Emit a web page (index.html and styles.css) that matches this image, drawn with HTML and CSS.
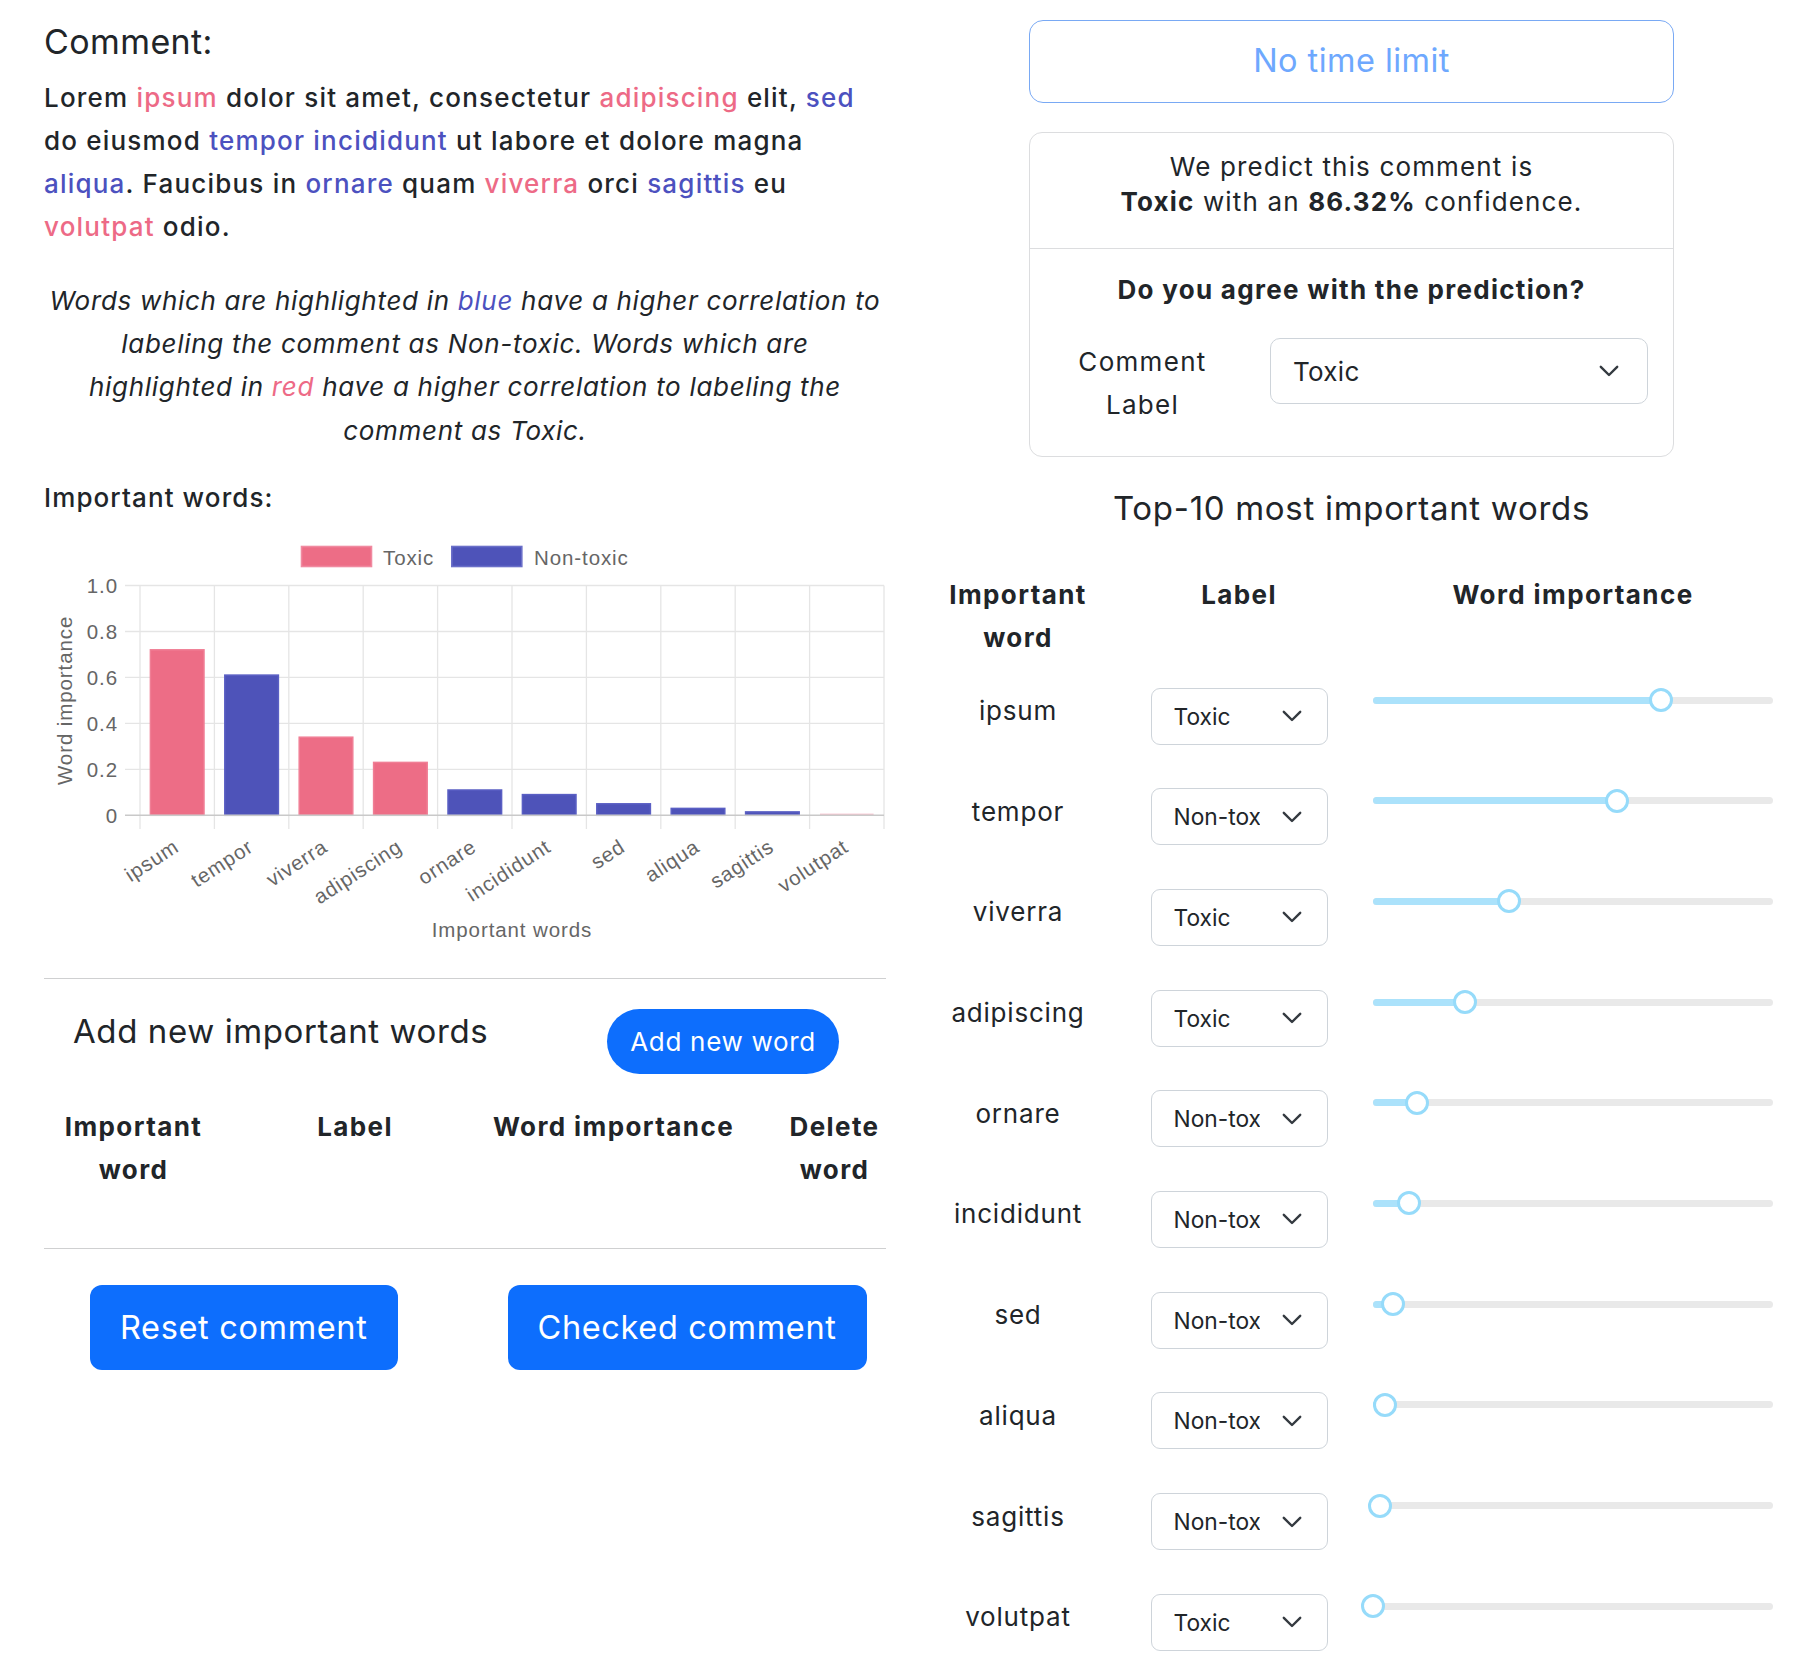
FILE: index.html
```html
<!DOCTYPE html>
<html lang="en">
<head>
<meta charset="utf-8">
<title>Comment review</title>
<link rel="stylesheet" href="styles.css">
</head>
<body>
<div class="page">
  <div class="left">
    <h2 class="comment-title">Comment:</h2>
    <p class="comment-text">Lorem <span class="w-tox">ipsum</span> dolor sit amet, consectetur <span class="w-tox">adipiscing</span> elit, <span class="w-non">sed</span> do eiusmod <span class="w-non">tempor</span> <span class="w-non">incididunt</span> ut labore et dolore magna <span class="w-non">aliqua</span>. Faucibus in <span class="w-non">ornare</span> quam <span class="w-tox">viverra</span> orci <span class="w-non">sagittis</span> eu <span class="w-tox">volutpat</span> odio.</p>
    <p class="legend-note">Words which are highlighted in <span class="w-non">blue</span> have a higher correlation to labeling the comment as Non-toxic. Words which are highlighted in <span class="w-tox">red</span> have a higher correlation to labeling the comment as Toxic.</p>
    <h3 class="imp-title">Important words:</h3>
    <svg class="chart" width="842" height="410" viewBox="0 0 842 410">
      <g class="legend">
        <rect x="257.5" y="11.5" width="70" height="20" fill="#ed6d86" stroke="#f08aa0" stroke-width="1.6"/>
        <text x="339" y="22">Toxic</text>
        <rect x="407.8" y="11.5" width="70" height="20" fill="#4e53b9" stroke="#6a6fc8" stroke-width="1.6"/>
        <text x="490" y="22">Non-toxic</text>
      </g>
      <g class="grid">
        <line x1="81" y1="50.5" x2="840" y2="50.5"/>
        <line x1="81" y1="96.5" x2="840" y2="96.5"/>
        <line x1="81" y1="142.4" x2="840" y2="142.4"/>
        <line x1="81" y1="188.4" x2="840" y2="188.4"/>
        <line x1="81" y1="234.3" x2="840" y2="234.3"/>
        <line x1="96" y1="50.5" x2="96" y2="294"/>
        <line x1="170.4" y1="50.5" x2="170.4" y2="294"/>
        <line x1="244.8" y1="50.5" x2="244.8" y2="294"/>
        <line x1="319.2" y1="50.5" x2="319.2" y2="294"/>
        <line x1="393.6" y1="50.5" x2="393.6" y2="294"/>
        <line x1="468" y1="50.5" x2="468" y2="294"/>
        <line x1="542.4" y1="50.5" x2="542.4" y2="294"/>
        <line x1="616.8" y1="50.5" x2="616.8" y2="294"/>
        <line x1="691.2" y1="50.5" x2="691.2" y2="294"/>
        <line x1="765.6" y1="50.5" x2="765.6" y2="294"/>
        <line x1="840" y1="50.5" x2="840" y2="294"/>
      </g>
      <g class="ticks-y">
        <text x="74" y="50.5">1.0</text>
        <text x="74" y="96.5">0.8</text>
        <text x="74" y="142.4">0.6</text>
        <text x="74" y="188.4">0.4</text>
        <text x="74" y="234.3">0.2</text>
        <text x="74" y="280.3">0</text>
      </g>
      <g class="bars">
        <rect class="b-tox" x="106.4" y="114.8" width="53.6" height="165.5"/>
        <rect class="b-non" x="180.8" y="140.1" width="53.6" height="140.2"/>
        <rect class="b-tox" x="255.2" y="202.2" width="53.6" height="78.1"/>
        <rect class="b-tox" x="329.6" y="227.4" width="53.6" height="52.9"/>
        <rect class="b-non" x="404" y="255" width="53.6" height="25.3"/>
        <rect class="b-non" x="478.4" y="259.6" width="53.6" height="20.7"/>
        <rect class="b-non" x="552.8" y="268.8" width="53.6" height="11.5"/>
        <rect class="b-non" x="627.2" y="273.4" width="53.6" height="6.9"/>
        <rect class="b-non" x="701.6" y="276.9" width="53.6" height="3.4"/>
        <rect class="b-faint" x="776" y="278.6" width="53.6" height="1.7"/>
      </g>
      <line class="zero" x1="81" y1="280.3" x2="840" y2="280.3"/>
      <g class="ticks-x">
        <text transform="translate(132.2 309) rotate(-33)">ipsum</text>
        <text transform="translate(206.6 309) rotate(-33)">tempor</text>
        <text transform="translate(281 309) rotate(-33)">viverra</text>
        <text transform="translate(355.4 309) rotate(-33)">adipiscing</text>
        <text transform="translate(429.8 309) rotate(-33)">ornare</text>
        <text transform="translate(504.2 309) rotate(-33)">incididunt</text>
        <text transform="translate(578.6 309) rotate(-33)">sed</text>
        <text transform="translate(653 309) rotate(-33)">aliqua</text>
        <text transform="translate(727.4 309) rotate(-33)">sagittis</text>
        <text transform="translate(801.8 309) rotate(-33)">volutpat</text>
      </g>
      <text class="axis-title" x="468" y="394">Important words</text>
      <text class="axis-title" transform="translate(20 165.4) rotate(-90)">Word importance</text>
    </svg>
    <hr class="rule rule-top">
    <div class="add-row">
      <h3 class="add-title">Add new important words</h3>
      <button class="btn btn-pill">Add new word</button>
    </div>
    <div class="new-table">
      <div class="nh nh-1">Important word</div>
      <div class="nh nh-2">Label</div>
      <div class="nh nh-3">Word importance</div>
      <div class="nh nh-4">Delete word</div>
    </div>
    <hr class="rule rule-bottom">
    <div class="actions">
      <button class="btn btn-lg">Reset comment</button>
      <button class="btn btn-lg">Checked comment</button>
    </div>
  </div>

  <div class="right">
    <div class="timer">No time limit</div>
    <div class="card">
      <div class="card-pred">We predict this comment is<br><b>Toxic</b> with an <b>86.32%</b> confidence.</div>
      <div class="card-agree">
        <div class="agree-q">Do you agree with the prediction?</div>
        <div class="agree-row">
          <div class="agree-label">Comment Label</div>
          <div class="select select-lg"><span class="select-text">Toxic</span><svg class="chev" width="20" height="12" viewBox="0 0 20 12"><path d="M1.8 1.8 L10 10 L18.2 1.8"/></svg></div>
        </div>
      </div>
    </div>
    <h3 class="top-title">Top-10 most important words</h3>
    <div class="top-head">
      <div class="th">Important word</div>
      <div class="th th-label">Label</div>
      <div class="th">Word importance</div>
    </div>
    <div class="top-table">
      <div class="td-word">ipsum</div>
      <div class="td-label"><div class="select"><span class="select-text">Toxic</span><svg class="chev" width="20" height="12" viewBox="0 0 20 12"><path d="M1.8 1.8 L10 10 L18.2 1.8"/></svg></div></div>
      <div class="slider"><div class="rail"></div><div class="track" style="width:72%"></div><div class="handle" style="left:72%"></div></div>

      <div class="td-word">tempor</div>
      <div class="td-label"><div class="select"><span class="select-text">Non-toxic</span><svg class="chev" width="20" height="12" viewBox="0 0 20 12"><path d="M1.8 1.8 L10 10 L18.2 1.8"/></svg></div></div>
      <div class="slider"><div class="rail"></div><div class="track" style="width:61%"></div><div class="handle" style="left:61%"></div></div>

      <div class="td-word">viverra</div>
      <div class="td-label"><div class="select"><span class="select-text">Toxic</span><svg class="chev" width="20" height="12" viewBox="0 0 20 12"><path d="M1.8 1.8 L10 10 L18.2 1.8"/></svg></div></div>
      <div class="slider"><div class="rail"></div><div class="track" style="width:34%"></div><div class="handle" style="left:34%"></div></div>

      <div class="td-word">adipiscing</div>
      <div class="td-label"><div class="select"><span class="select-text">Toxic</span><svg class="chev" width="20" height="12" viewBox="0 0 20 12"><path d="M1.8 1.8 L10 10 L18.2 1.8"/></svg></div></div>
      <div class="slider"><div class="rail"></div><div class="track" style="width:23%"></div><div class="handle" style="left:23%"></div></div>

      <div class="td-word">ornare</div>
      <div class="td-label"><div class="select"><span class="select-text">Non-toxic</span><svg class="chev" width="20" height="12" viewBox="0 0 20 12"><path d="M1.8 1.8 L10 10 L18.2 1.8"/></svg></div></div>
      <div class="slider"><div class="rail"></div><div class="track" style="width:11%"></div><div class="handle" style="left:11%"></div></div>

      <div class="td-word">incididunt</div>
      <div class="td-label"><div class="select"><span class="select-text">Non-toxic</span><svg class="chev" width="20" height="12" viewBox="0 0 20 12"><path d="M1.8 1.8 L10 10 L18.2 1.8"/></svg></div></div>
      <div class="slider"><div class="rail"></div><div class="track" style="width:9%"></div><div class="handle" style="left:9%"></div></div>

      <div class="td-word">sed</div>
      <div class="td-label"><div class="select"><span class="select-text">Non-toxic</span><svg class="chev" width="20" height="12" viewBox="0 0 20 12"><path d="M1.8 1.8 L10 10 L18.2 1.8"/></svg></div></div>
      <div class="slider"><div class="rail"></div><div class="track" style="width:5%"></div><div class="handle" style="left:5%"></div></div>

      <div class="td-word">aliqua</div>
      <div class="td-label"><div class="select"><span class="select-text">Non-toxic</span><svg class="chev" width="20" height="12" viewBox="0 0 20 12"><path d="M1.8 1.8 L10 10 L18.2 1.8"/></svg></div></div>
      <div class="slider"><div class="rail"></div><div class="track" style="width:3%"></div><div class="handle" style="left:3%"></div></div>

      <div class="td-word">sagittis</div>
      <div class="td-label"><div class="select"><span class="select-text">Non-toxic</span><svg class="chev" width="20" height="12" viewBox="0 0 20 12"><path d="M1.8 1.8 L10 10 L18.2 1.8"/></svg></div></div>
      <div class="slider"><div class="rail"></div><div class="track" style="width:1.8%"></div><div class="handle" style="left:1.8%"></div></div>

      <div class="td-word">volutpat</div>
      <div class="td-label"><div class="select"><span class="select-text">Toxic</span><svg class="chev" width="20" height="12" viewBox="0 0 20 12"><path d="M1.8 1.8 L10 10 L18.2 1.8"/></svg></div></div>
      <div class="slider"><div class="rail"></div><div class="track" style="width:0%"></div><div class="handle" style="left:0%"></div></div>
    </div>
  </div>
</div>
</body>
</html>
```

FILE: styles.css
```css
* { box-sizing: border-box; }

html, body {
  margin: 0;
  background: #ffffff;
}

body {
  font-family: Inter, "Noto Sans", "Liberation Sans", sans-serif;
  color: #212529;
  font-size: 26px;
  letter-spacing: 1.1px;
}

.page {
  display: flex;
  align-items: flex-start;
  padding-left: 44px;
  gap: 24px;
  width: 1819px;
}

/* ---------- left column ---------- */
.left {
  width: 842px;
  flex: none;
  padding-top: 21px;
}

.comment-title {
  margin: 0 0 13.5px;
  font-size: 34px;
  line-height: 41px;
  font-weight: 400;
  letter-spacing: 0.4px;
}

.comment-text {
  margin: 0 0 30px;
  font-size: 26px;
  line-height: 43.3px;
  font-weight: 500;
  letter-spacing: 1.2px;
}

.w-tox { color: #ed6a86; }
.w-non { color: #4c51bf; }

.legend-note {
  margin: 0 0 24px;
  padding: 0 5px;
  font-size: 26px;
  line-height: 43.3px;
  font-style: italic;
  font-weight: 400;
  letter-spacing: 0.69px;
  text-align: center;
}

.imp-title {
  margin: 0 0 16px;
  font-size: 26px;
  line-height: 43.3px;
  font-weight: 500;
  letter-spacing: 1.1px;
}

.chart {
  display: block;
  font-family: "Liberation Sans", Arial, sans-serif;
  font-size: 20.5px;
  letter-spacing: 0.9px;
}

.chart text { fill: #666666; }
.chart .legend text { dominant-baseline: central; }
.chart .grid line { stroke: #e5e5e5; stroke-width: 1.3; }
.chart .zero { stroke: #c9c9c9; stroke-width: 1.6; }
.chart .ticks-y text { text-anchor: end; dominant-baseline: central; }
.chart .ticks-x text { text-anchor: end; dominant-baseline: central; }
.chart .axis-title { text-anchor: middle; dominant-baseline: central; }
.chart .b-tox { fill: #ed6d86; stroke: #f07e95; stroke-width: 1.5; }
.chart .b-non { fill: #4e53b9; stroke: #5a5fc4; stroke-width: 1.5; }
.chart .b-faint { fill: #f7c4cf; }

.rule {
  border: 0;
  border-top: 1px solid #cfd0d1;
  margin: 0;
}
.rule-top { margin-top: 33px; margin-bottom: 30px; }
.rule-bottom { margin-top: 57px; margin-bottom: 36px; }

.add-row {
  display: flex;
  align-items: flex-start;
  height: 65px;
}

.add-title {
  margin: 0 0 0 29px;
  font-size: 33px;
  line-height: 44px;
  font-weight: 400;
  letter-spacing: 0.6px;
}

.btn {
  font-family: inherit;
  border: 0;
  color: #ffffff;
  background: #0d6efd;
  cursor: pointer;
}

.btn-pill {
  margin-left: auto;
  margin-right: 47px;
  height: 65px;
  padding: 0 23px;
  border-radius: 33px;
  font-size: 26px;
  font-weight: 400;
  letter-spacing: 0.7px;
}

.new-table {
  margin-top: 30.5px;
  display: grid;
  grid-template-columns: 179px 264px 253px 189px;
  justify-items: center;
}

.nh {
  font-weight: 700;
  font-size: 26px;
  line-height: 43px;
  text-align: center;
  letter-spacing: 1.4px;
}
.nh-1 { width: 160px; }
.nh-4 { width: 130px; }

.actions {
  display: flex;
  padding-left: 46px;
  gap: 110px;
}

.btn-lg {
  height: 85px;
  padding: 0 30px;
  border-radius: 12px;
  font-size: 32.5px;
  font-weight: 400;
  letter-spacing: 0.65px;
}

/* ---------- right column ---------- */
.right {
  width: 883px;
  flex: none;
  padding-top: 20px;
}

.timer {
  width: 645px;
  margin: 0 auto;
  height: 83px;
  border: 1.3px solid #79a9f4;
  border-radius: 14px;
  color: #6ea8fe;
  font-size: 32.5px;
  line-height: 80px;
  text-align: center;
  letter-spacing: 0.45px;
}

.card {
  width: 645px;
  margin: 29px auto 0;
  border: 1px solid #dcdddf;
  border-radius: 13px;
}

.card-pred {
  padding: 17px 0 29px;
  border-bottom: 1px solid #dcdddf;
  text-align: center;
  font-size: 26px;
  line-height: 34.5px;
  letter-spacing: 1.15px;
}

.card-pred b { font-weight: 700; }

.card-agree {
  padding: 19px 25px 29px;
}

.agree-q {
  text-align: center;
  font-weight: 700;
  font-size: 26px;
  line-height: 43px;
  margin-bottom: 27px;
  letter-spacing: 1.3px;
}

.agree-row {
  display: grid;
  grid-template-columns: 1fr 378px;
  column-gap: 40px;
  align-items: start;
}

.agree-label {
  text-align: center;
  font-size: 26px;
  line-height: 43.5px;
  padding: 1.5px 20px 0;
  letter-spacing: 1.3px;
}

.select {
  display: flex;
  align-items: center;
  border: 1px solid #ced4da;
  border-radius: 9px;
  background: #ffffff;
  width: 177px;
  height: 57px;
  padding-left: 22px;
  padding-right: 25px;
  font-size: 22.75px;
  letter-spacing: 0;
}

.select-text {
  flex: none;
  width: 86px;
  overflow: hidden;
  white-space: nowrap;
}

.chev {
  flex: none;
  margin-left: auto;
}
.chev path {
  fill: none;
  stroke: #343a40;
  stroke-width: 2.4;
  stroke-linecap: round;
  stroke-linejoin: round;
}

.select-lg {
  width: 378px;
  height: 66px;
  padding-right: 28px;
  font-size: 26px;
  border-radius: 10px;
  letter-spacing: 0.3px;
}
.select-lg .select-text { width: auto; }

.top-title {
  margin: 30.5px 0 0;
  text-align: center;
  font-size: 33px;
  line-height: 43px;
  font-weight: 400;
  letter-spacing: 0.7px;
}

.top-head,
.top-table {
  margin-left: 33px;
  width: 830px;
  display: grid;
  grid-template-columns: 150px 280px 400px;
}

.top-head {
  margin-top: 43px;
  margin-bottom: 28.5px;
}

.th {
  font-weight: 700;
  font-size: 26px;
  line-height: 43px;
  text-align: center;
  letter-spacing: 1.4px;
}
.th-label { padding-left: 12px; }

.top-table {
  grid-auto-rows: 57px;
  row-gap: 43.7px;
}

.td-word {
  text-align: center;
  font-size: 26px;
  line-height: 43px;
  padding-top: 1.5px;
  letter-spacing: 0.8px;
}

.td-label {
  display: flex;
  justify-content: center;
  padding-left: 12px;
}

.slider {
  position: relative;
  height: 25px;
}

.rail {
  position: absolute;
  left: 0;
  right: 0;
  top: 9px;
  height: 7px;
  border-radius: 4px;
  background: #e9e9e9;
}

.track {
  position: absolute;
  left: 0;
  top: 9px;
  height: 7px;
  border-radius: 4px;
  background: #abe2fb;
}

.handle {
  position: absolute;
  top: 0.5px;
  width: 24px;
  height: 24px;
  margin-left: -12px;
  border-radius: 50%;
  border: 3.2px solid #96dbfa;
  background: #ffffff;
}
```
